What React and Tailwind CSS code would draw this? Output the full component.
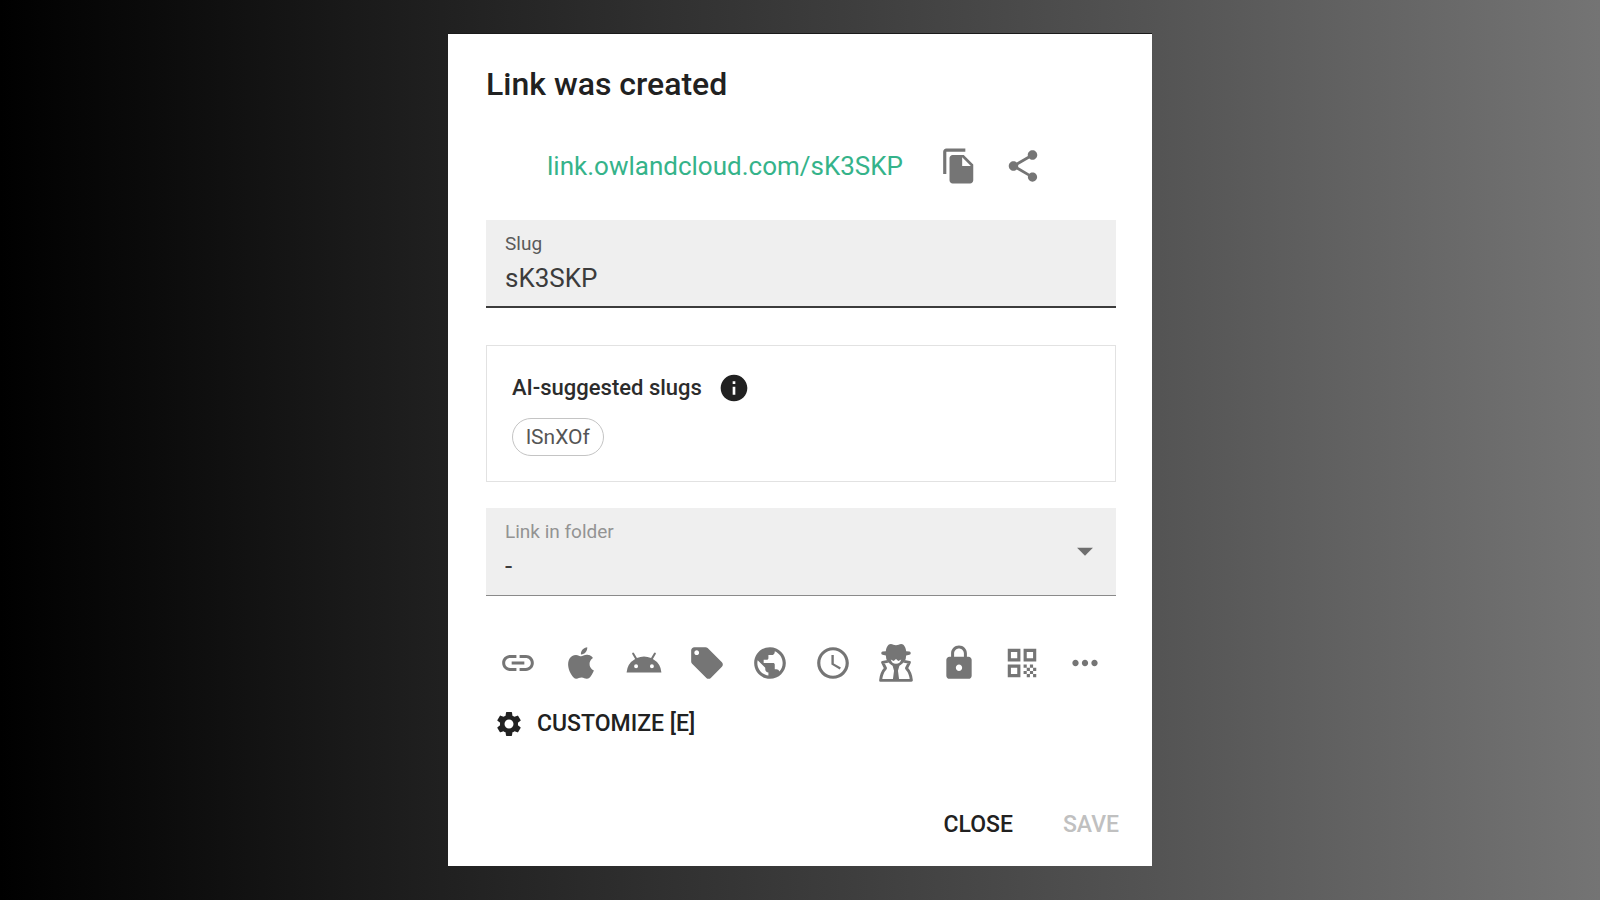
import {
  MdAccessTime,
  MdAndroid,
  MdArrowDropDown,
  MdFileCopy,
  MdInfo,
  MdLink,
  MdLocalOffer,
  MdLock,
  MdMoreHoriz,
  MdPublic,
  MdQrCode,
  MdSettings,
  MdShare,
} from 'react-icons/md'

function AppleIcon({ className }) {
  return (
    <svg viewBox="0 0 24 24" fill="currentColor" className={className} aria-hidden="true">
      <path d="M18.71,19.5C17.88,20.74 17,21.95 15.66,21.97C14.32,22 13.89,21.18 12.37,21.18C10.84,21.18 10.37,21.95 9.1,22C7.79,22.05 6.8,20.68 5.96,19.47C4.25,17 2.94,12.45 4.7,9.39C5.57,7.87 7.13,6.91 8.82,6.88C10.1,6.86 11.32,7.75 12.11,7.75C12.89,7.75 14.37,6.68 15.92,6.84C16.57,6.87 18.39,7.1 19.56,8.82C19.47,8.88 17.39,10.1 17.41,12.63C17.44,15.65 20.06,16.66 20.09,16.67C20.06,16.74 19.67,18.11 18.71,19.5M13,3.5C13.73,2.67 14.94,2.04 15.94,2C16.07,3.17 15.6,4.35 14.9,5.19C14.21,6.04 13.07,6.7 11.95,6.61C11.8,5.46 12.36,4.26 13,3.5Z" />
    </svg>
  )
}

// Hat, glasses and a turned-up coat collar
function SpyIcon({ className }) {
  return (
    <svg viewBox="0 0 116 116" fill="currentColor" className={className} aria-hidden="true">
      <path d="M27 22 C28 10 34 0 42 0 C48 0 52 4 58 4 C64 4 68 0 74 0 C82 0 88 10 89 22 L99 23 Q103 24 103 28 Q103 32 99 33 L89 35 Q89 48 83 55 Q72 67 58 71 Q44 67 33 55 Q27 48 27 35 L17 33 Q13 32 13 28 Q13 24 17 23 Z" />
      <path d="M42 47 L51 52 L58 46 L65 52 L74 47 Q71 60 58 60 Q45 60 42 47 Z" fill="white" />
      <path
        d="M33 53 L17 56 L26 74 Q13 88 11 111 H105 Q103 88 90 74 L99 56 L83 53"
        fill="none"
        stroke="currentColor"
        strokeWidth="9"
        strokeLinejoin="round"
      />
      <path d="M47 64 H69 L64 82 L68 112 H48 L52 82 Z" />
    </svg>
  )
}

const options = [
  { label: 'Edit link', Icon: MdLink },
  { label: 'iOS targeting', Icon: AppleIcon },
  { label: 'Android targeting', Icon: MdAndroid },
  { label: 'Tags', Icon: MdLocalOffer },
  { label: 'Geo targeting', Icon: MdPublic },
  { label: 'Expiration', Icon: MdAccessTime },
  { label: 'Cloaking', Icon: SpyIcon },
  { label: 'Password', Icon: MdLock },
  { label: 'QR code', Icon: MdQrCode },
  { label: 'More', Icon: MdMoreHoriz },
]

export default function App() {
  return (
    <div className="min-h-screen flex items-start justify-center bg-linear-to-r/srgb from-black to-[#747474] py-[33px] font-['Roboto',sans-serif] text-[#212121]">
      <main className="w-full max-w-[704px] bg-white border-t border-[#1a1a1a] pl-[38px] pr-9 pt-7 pb-[13px]">
        <h1 className="text-[32px] leading-[44px] font-medium">Link was created</h1>

        <div className="flex items-center justify-center mt-7">
          <a href="https://link.owlandcloud.com/sK3SKP" className="text-[26px] leading-8 text-[#35b38a] mr-6">
            link.owlandcloud.com/sK3SKP
          </a>
          <button type="button" aria-label="Copy link" className="size-16 flex items-center justify-center text-[#757575]">
            <MdFileCopy className="size-[38px]" />
          </button>
          <button type="button" aria-label="Share link" className="size-16 flex items-center justify-center text-[#757575]">
            <MdShare className="size-[38px]" />
          </button>
        </div>

        <div className="mt-[22px] h-[88px] bg-[#efefef] border-b-2 border-[#3c3c3c] px-[19px] pt-3">
          <label htmlFor="slug" className="block text-[19px] leading-6 text-[#5a5a5a]">Slug</label>
          <input
            id="slug"
            type="text"
            defaultValue="sK3SKP"
            className="block w-full mt-1 text-[26px] leading-9 text-[#3c3c3c] outline-none"
          />
        </div>

        <section className="mt-[37px] border border-[#e2e2e2] px-[25px] pt-[26px] pb-[25px]">
          <div className="flex items-center gap-4">
            <h2 className="text-[22px] leading-8 font-medium text-[#2c2c2c]">AI-suggested slugs</h2>
            <MdInfo className="size-8" />
          </div>
          <button type="button" className="mt-[14px] h-[38px] rounded-full border border-[#c4c4c4] px-[13px] text-[21px] leading-8 text-[#555]">
            lSnXOf
          </button>
        </section>

        <div className="relative mt-[26px] h-[88px] bg-[#efefef] border-b border-[#8a8a8a] px-[19px] pt-3">
          <label htmlFor="folder" className="block text-[19px] leading-6 text-[#939393]">Link in folder</label>
          <select id="folder" className="block w-full mt-1 appearance-none text-[26px] leading-9 text-[#3c3c3c] outline-none">
            <option>-</option>
          </select>
          <MdArrowDropDown className="absolute right-3 top-6 size-[38px] text-[#6e6e6e] pointer-events-none" />
        </div>

        <div className="grid grid-cols-10 mt-[35px] text-[#757575]">
          {options.map(({ label, Icon }) => (
            <button key={label} type="button" aria-label={label} className="h-16 flex items-center justify-center">
              <Icon className="size-[38px]" />
            </button>
          ))}
        </div>

        <button type="button" className="mt-px h-14 flex items-center gap-[13px] px-2 text-[23px] font-medium">
          <MdSettings className="size-[30px]" />
          CUSTOMIZE [E]
        </button>

        <div className="mt-[45px] -mr-[3px] flex justify-end gap-[50px] text-[23px] font-medium">
          <button type="button" className="h-14">CLOSE</button>
          <button type="button" disabled className="h-14 text-[#c0c0c0]">SAVE</button>
        </div>
      </main>
    </div>
  )
}
